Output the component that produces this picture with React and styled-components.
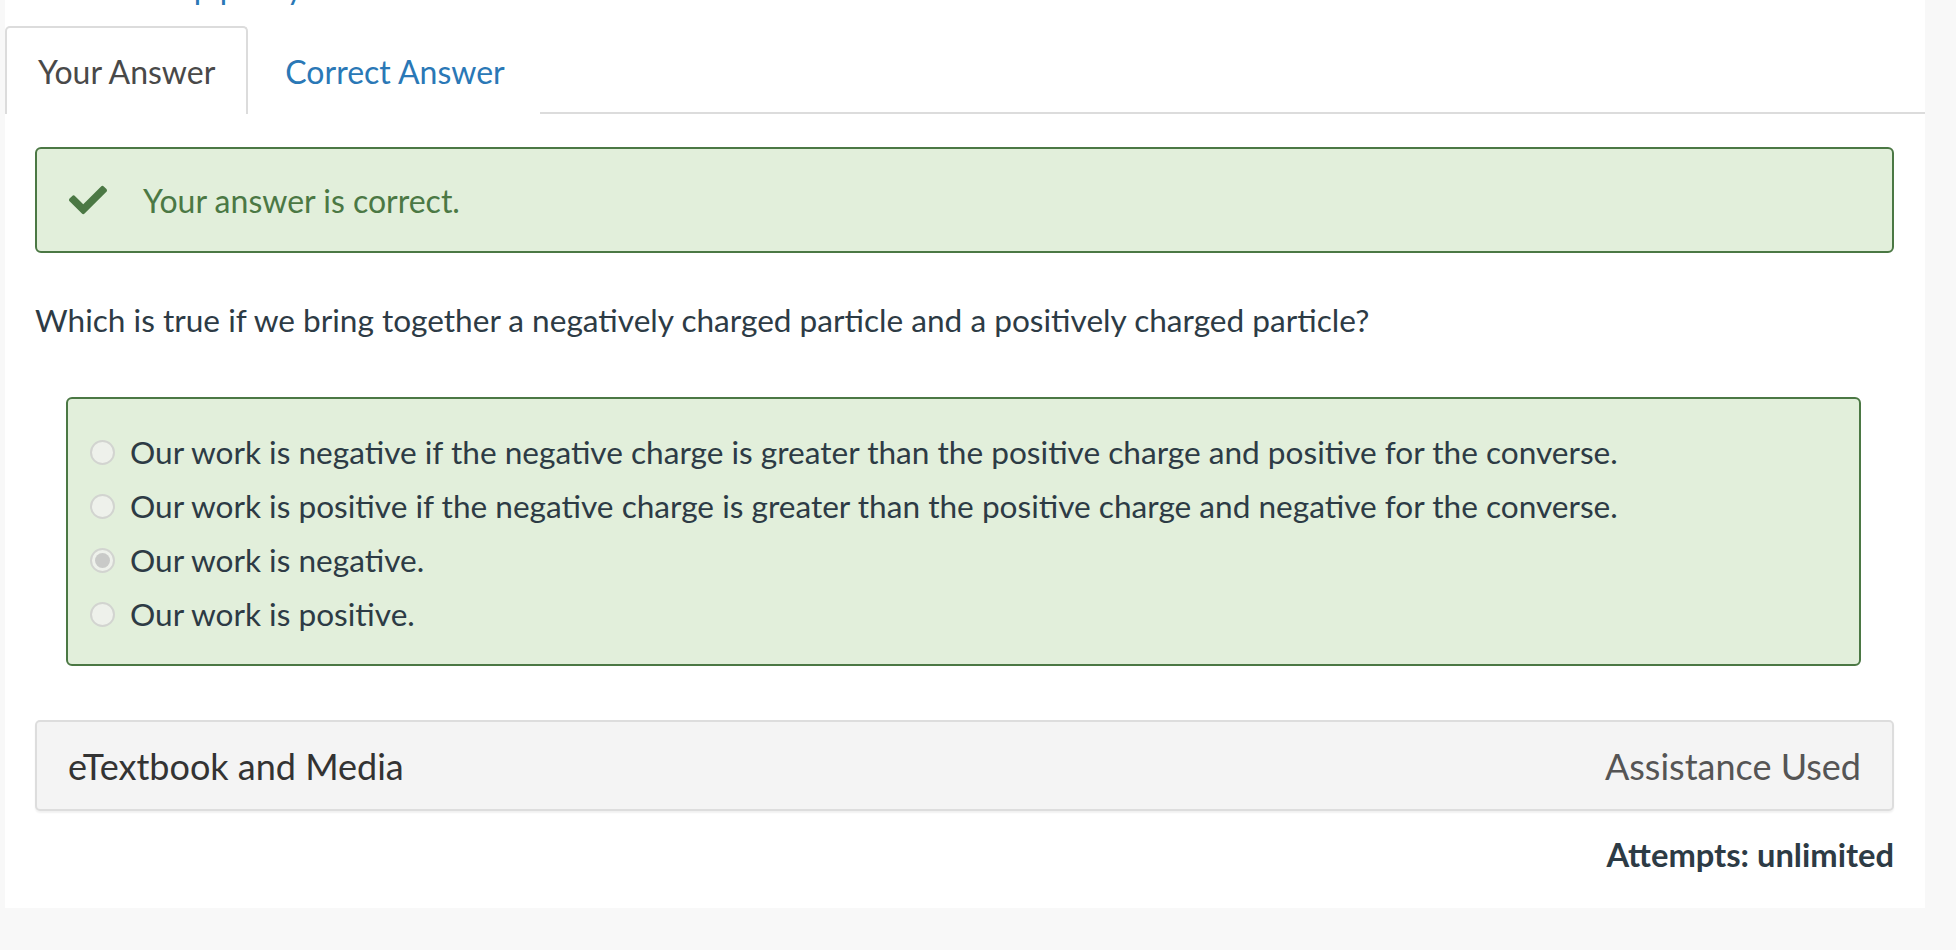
import styled, { createGlobalStyle } from 'styled-components'
import { FaCheck } from 'react-icons/fa'

const GlobalStyle = createGlobalStyle`
body {
  margin: 0;
  background-color: #f8f8f8;
  font-family: Lato, "Liberation Sans", sans-serif;
}
`

const opcoes = [
  { texto: 'Our work is negative if the negative charge is greater than the positive charge and positive for the converse.', id: 1 },
  { texto: 'Our work is positive if the negative charge is greater than the positive charge and negative for the converse.', id: 2 },
  { texto: 'Our work is negative.', id: 3, marcada: true },
  { texto: 'Our work is positive.', id: 4 }
]

const Painel = styled.div`
margin-left: 5px;
width: 1920px;
height: 908px;
background-color: #fff;
overflow: hidden;
`
const LinkTopo = styled.div`
height: 26px;
overflow: hidden;
`
const LinkTexto = styled.a`
display: block;
margin-top: -35px;
color: #2a78b6;
font-size: 32px;
line-height: 44px;
padding-left: 4px;
`
const Abas = styled.div`
display: flex;
border-bottom: 2px solid #dcdcdc;
height: 86px;
`
const Aba = styled.div`
display: flex;
align-items: center;
padding: 0 ${p => (p.$ativa ? '31px' : '33px')} 0 ${p => (p.$ativa ? '31px' : '35px')};
font-size: 32px;
color: ${p => (p.$ativa ? '#494949' : '#2a78b6')};
background-color: #fff;
border: ${p => (p.$ativa ? '2px solid #dcdcdc' : '2px solid transparent')};
border-bottom: none;
border-radius: 5px 5px 0 0;
margin-bottom: -2px;
`
const Conteudo = styled.div`
padding: 0 31px 0 30px;
`
const Alerta = styled.div`
margin-top: 33px;
height: 106px;
box-sizing: border-box;
display: flex;
align-items: center;
gap: 36px;
padding-left: 32px;
background-color: #e2efdb;
border: 2px solid #4b7844;
border-radius: 6px;
color: #4b7844;
font-size: 32px;
`
const Pergunta = styled.p`
margin: 0;
height: 144px;
padding-bottom: 10px;
box-sizing: border-box;
display: flex;
align-items: center;
color: #2d3b45;
font-size: 31.6px;
`
const CaixaOpcoes = styled.div`
margin: 0 33px 0 31px;
padding: 26px 0 26px 22px;
background-color: #e2efdb;
border: 2px solid #4b7844;
border-radius: 6px;
box-sizing: border-box;
height: 269px;
`
const Opcao = styled.label`
display: flex;
align-items: center;
gap: 15px;
height: 54px;
color: #2d3b45;
font-size: 31.6px;
`
const Radio = styled.span`
flex-shrink: 0;
width: 25px;
height: 25px;
box-sizing: border-box;
border-radius: 50%;
border: 2px solid #d2d4d0;
background-color: #eef1eb;
display: flex;
align-items: center;
justify-content: center;
&::after {
  content: '';
  width: 15px;
  height: 15px;
  border-radius: 50%;
  background-color: ${p => (p.$marcada ? '#c9cac8' : 'transparent')};
}
`
const Midia = styled.div`
margin-top: 54px;
height: 91px;
box-sizing: border-box;
display: flex;
align-items: center;
justify-content: space-between;
padding: 0 31px;
background-color: #f4f4f4;
border: 2px solid #dddddd;
border-radius: 5px;
box-shadow: 0 2px 2px rgba(0, 0, 0, 0.06);
font-size: 36px;
`
const MidiaTitulo = styled.span`
color: #333;
`
const Assistencia = styled.span`
color: #555;
`
const Tentativas = styled.div`
height: 86px;
display: flex;
align-items: center;
justify-content: flex-end;
color: #2d3b45;
font-size: 32.7px;
font-weight: 700;
`

function App() {
  return (
    <>
      <GlobalStyle />
      <Painel>
        <LinkTopo>
          <LinkTexto>View text help policy</LinkTexto>
        </LinkTopo>
        <Abas>
          <Aba $ativa>Your Answer</Aba>
          <Aba>Correct Answer</Aba>
        </Abas>
        <Conteudo>
          <Alerta>
            <FaCheck size={38} />
            <span>Your answer is correct.</span>
          </Alerta>
          <Pergunta>Which is true if we bring together a negatively charged particle and a positively charged particle?</Pergunta>
          <CaixaOpcoes>
            {opcoes.map(op => (
              <Opcao key={op.id}>
                <Radio $marcada={op.marcada} />
                {op.texto}
              </Opcao>
            ))}
          </CaixaOpcoes>
          <Midia>
            <MidiaTitulo>eTextbook and Media</MidiaTitulo>
            <Assistencia>Assistance Used</Assistencia>
          </Midia>
          <Tentativas>Attempts: unlimited</Tentativas>
        </Conteudo>
      </Painel>
    </>
  )
}
export default App
